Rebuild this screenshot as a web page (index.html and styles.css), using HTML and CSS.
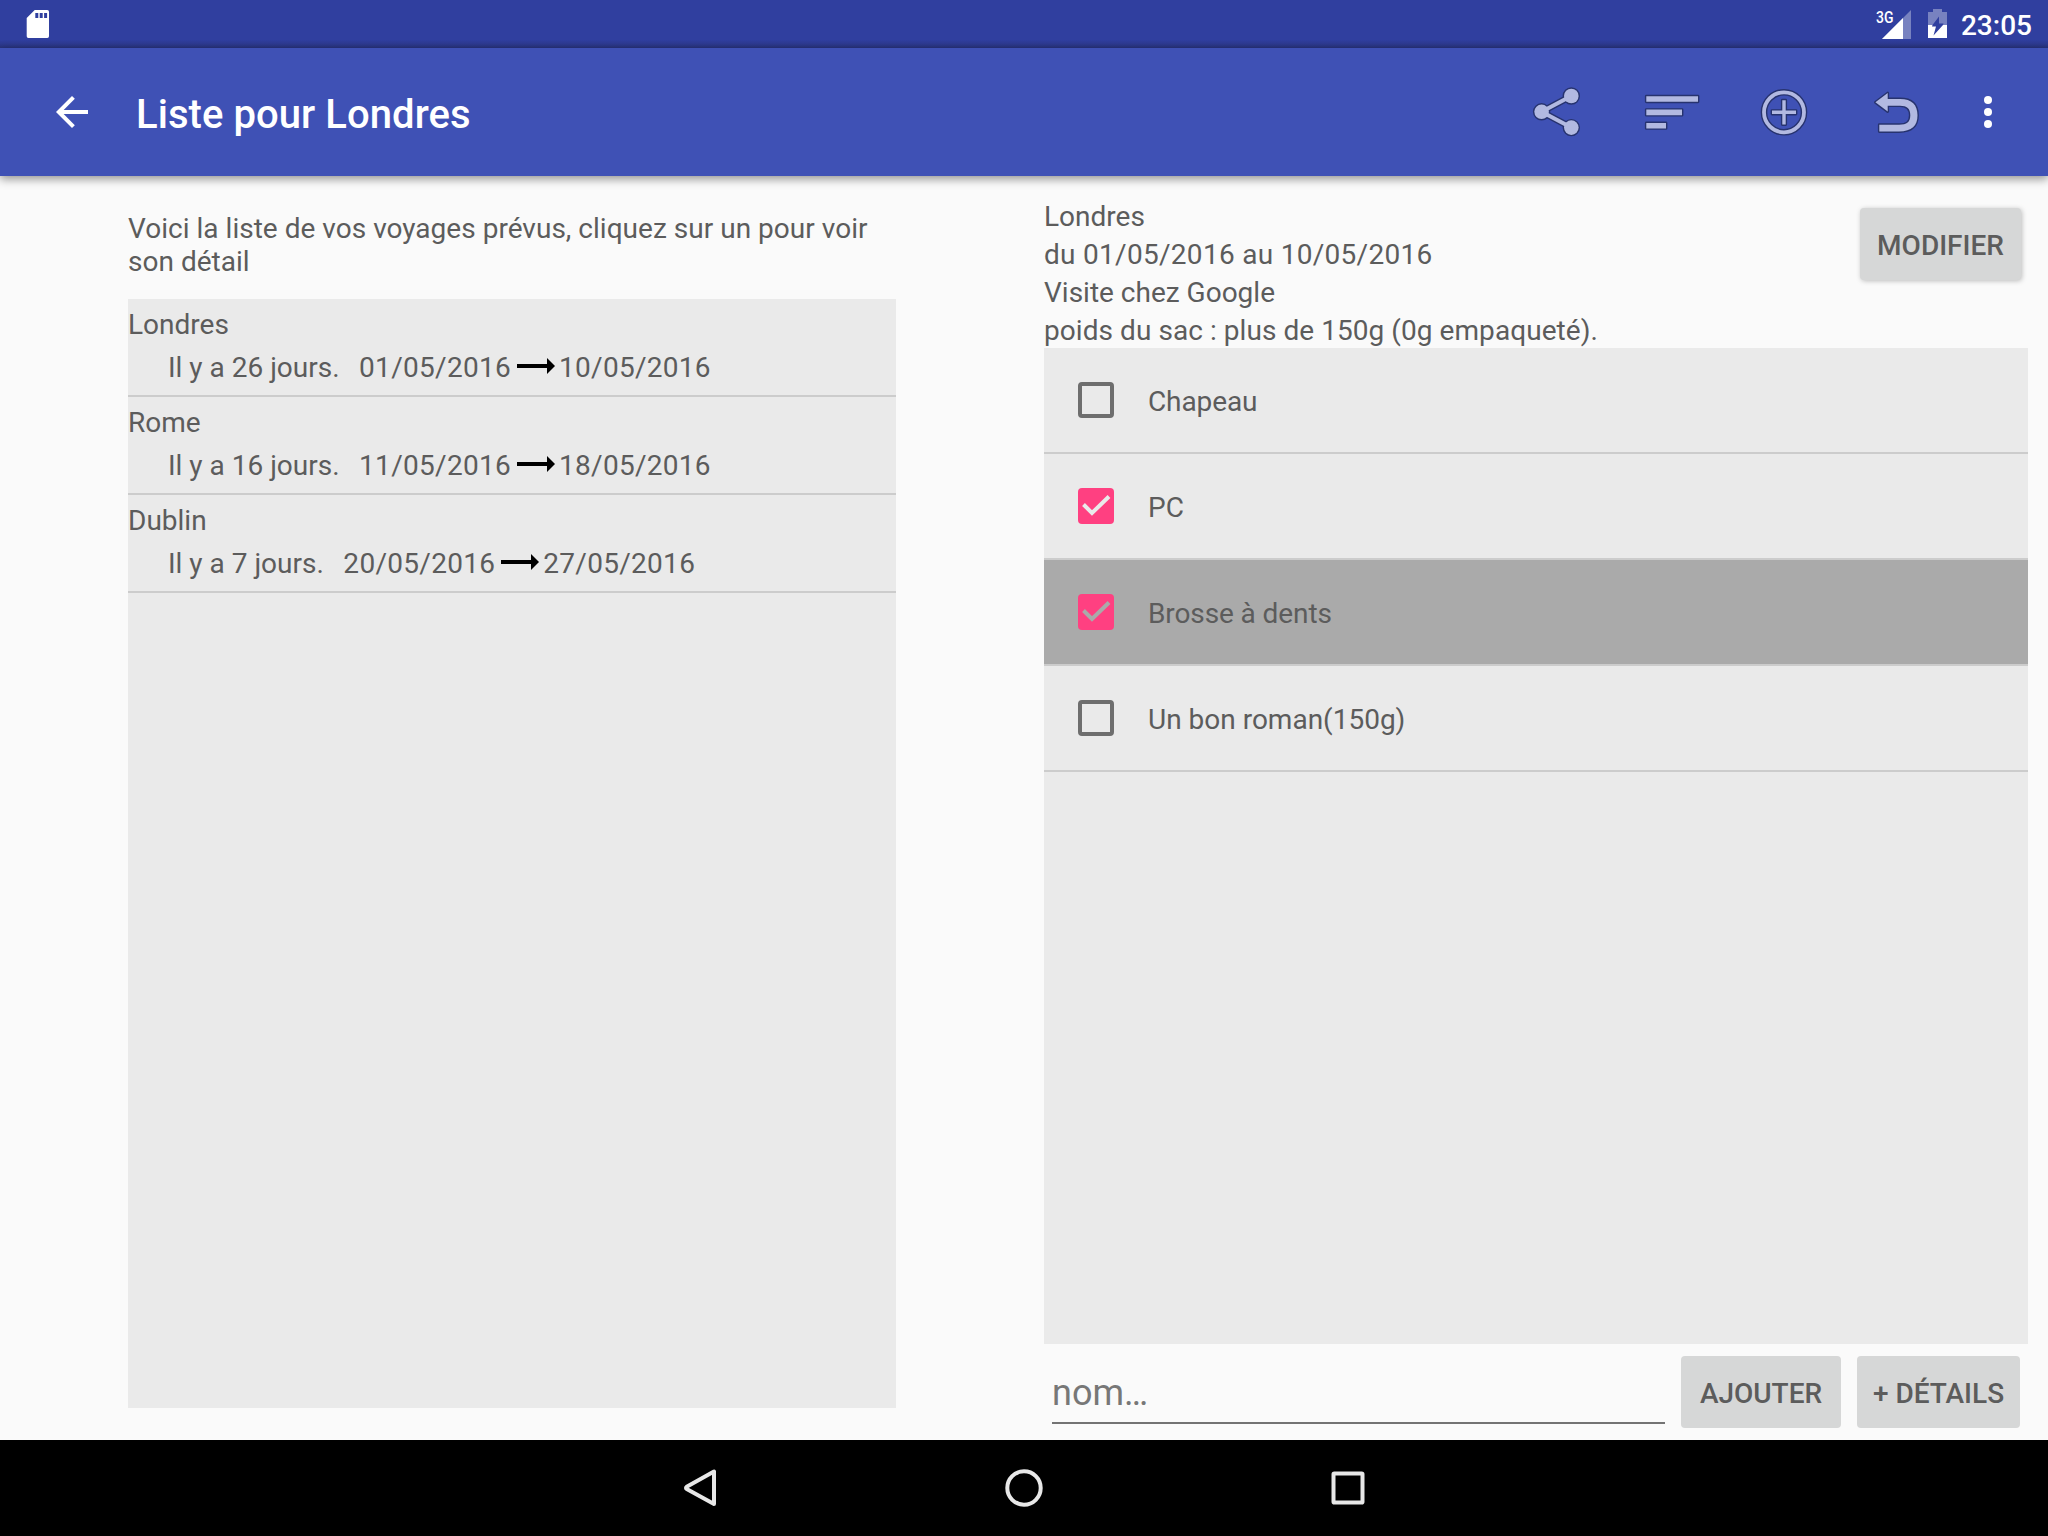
FILE: index.html
```html
<!DOCTYPE html>
<html lang="fr">
<head>
<meta charset="utf-8">
<title>Liste pour Londres</title>
<link rel="stylesheet" href="styles.css">
</head>
<body>
<div class="screen">
  <div class="status-bar">
    <svg class="sd-icon" width="24" height="28" viewBox="0 0 24 28"><path fill="#fff" fill-rule="evenodd" d="M8.7 0H21.3Q23 0 23 1.7V26.3Q23 28 21.3 28H2.4Q.7 28 .7 26.3V8Zm.6 3v5h3V3Zm4.4 0v5h3V3Zm4.4 0v5h3V3Z"/></svg>
    <div class="status-right">
      <span class="network">3G</span>
      <svg class="signal-icon" width="29" height="29" viewBox="0 0 29 29"><path fill="#fff" fill-opacity=".35" d="M29 0V29H0Z"/><path fill="#fff" d="M21 8V29H0Z"/></svg>
      <svg class="battery-icon" width="19" height="29" viewBox="0 0 19 29"><path fill="#fff" fill-opacity=".35" d="M5 0h9v3h5v13h-4l.5-1.500h-4.500V7.500L4.500 16H0V3h5Z"/><path fill="#fff" d="M0 16H4.500L4 17.500H8L5.500 26.500 15 16H19V29H0Z"/></svg>
      <span class="clock">23:05</span>
    </div>
  </div>
  <header class="app-bar">
    <svg class="back" width="32" height="32" viewBox="0 0 32 32"><path fill="#fff" d="M32 14H7.660L18.840 2.820 16 0 0 16 16 32l2.820-2.820L7.660 18H32Z"/></svg>
    <h1 class="title">Liste pour Londres</h1>
    <div class="actions">
      <svg class="action" width="64" height="64" viewBox="0 0 64 64"><path class="edge" d="M43.300 16 13.600 31.800 43.300 47.600"/><circle class="dot" cx="43.300" cy="16" r="7.300"/><circle class="dot" cx="13.600" cy="31.800" r="7.300"/><circle class="dot" cx="43.300" cy="47.600" r="7.300"/><path class="link" d="M43.300 16 13.600 31.800 43.300 47.600"/></svg>
      <svg class="action" width="64" height="64" viewBox="0 0 64 64"><path class="shape" d="M6.300 16.200H58V21.800H6.300ZM6.300 29.600H42V35.200H6.300ZM6.300 43H26V48.400H6.300Z"/></svg>
      <svg class="action" width="64" height="64" viewBox="0 0 64 64"><circle class="ring-edge" cx="32" cy="32.300" r="20"/><circle class="ring" cx="32" cy="32.300" r="20"/><path class="shape" d="M30.300 20.200h3.400v10.400h10.300v3.400H33.700V44.600H30.300V34H20V30.600H30.300Z"/></svg>
      <svg class="action" width="64" height="64" viewBox="0 0 64 64"><path class="shape" d="M11.400 22.300 23.700 13V19H36C48 19 53.500 25 53.500 35.300S48 51.500 35 51.500H15.300V44.700H35C43 44.700 46.300 42 46.300 35.300S43 25.700 36 25.700H23.700V31.600Z"/></svg>
      <svg class="overflow" width="8" height="32" viewBox="0 0 8 32"><g fill="#fff"><circle cx="4" cy="4" r="4"/><circle cx="4" cy="16" r="4"/><circle cx="4" cy="28" r="4"/></g></svg>
    </div>
  </header>
  <main class="content">
    <section class="trips">
      <p class="intro">Voici la liste de vos voyages prévus, cliquez sur un pour voir son détail</p>
      <ul class="list trip-list">
        <li class="trip"><div class="trip-name">Londres</div><div class="trip-dates"><span class="ago">Il y a 26 jours.</span><span class="date">01/05/2016</span><svg class="arrow" width="38" height="16" viewBox="0 0 38 16"><path d="M0 6H30V0L38 8 30 16V10H0Z"/></svg><span class="date">10/05/2016</span></div></li>
        <li class="trip"><div class="trip-name">Rome</div><div class="trip-dates"><span class="ago">Il y a 16 jours.</span><span class="date">11/05/2016</span><svg class="arrow" width="38" height="16" viewBox="0 0 38 16"><path d="M0 6H30V0L38 8 30 16V10H0Z"/></svg><span class="date">18/05/2016</span></div></li>
        <li class="trip"><div class="trip-name">Dublin</div><div class="trip-dates"><span class="ago">Il y a 7 jours.</span><span class="date">20/05/2016</span><svg class="arrow" width="38" height="16" viewBox="0 0 38 16"><path d="M0 6H30V0L38 8 30 16V10H0Z"/></svg><span class="date">27/05/2016</span></div></li>
      </ul>
    </section>
    <section class="detail">
      <div class="detail-head">
        <div class="summary">
          <div>Londres</div>
          <div class="date">du 01/05/2016 au 10/05/2016</div>
          <div>Visite chez Google</div>
          <div class="weight">poids du sac : plus de 150g (0g empaqueté).</div>
        </div>
        <button class="btn raised">MODIFIER</button>
      </div>
      <ul class="list item-list">
        <li class="item"><span class="box"></span><span class="label tight">Chapeau</span></li>
        <li class="item"><span class="box checked"><svg width="36" height="36" viewBox="0 0 36 36"><path d="M5.500 16.500 14 25 31 8.500"/></svg></span><span class="label">PC</span></li>
        <li class="item selected"><span class="box checked"><svg width="36" height="36" viewBox="0 0 36 36"><path d="M5.500 16.500 14 25 31 8.500"/></svg></span><span class="label tight">Brosse à dents</span></li>
        <li class="item"><span class="box"></span><span class="label">Un bon roman(150g)</span></li>
      </ul>
      <div class="add-row">
        <div class="field">nom…</div>
        <button class="btn add">AJOUTER</button>
        <button class="btn more">+ DÉTAILS</button>
      </div>
    </section>
  </main>
  <nav class="nav-bar">
    <svg width="40" height="40" viewBox="0 0 40 40"><path d="M34 3.500V36L6.700 21Q5.300 19.900 6.700 18.800Z"/></svg>
    <svg width="40" height="40" viewBox="0 0 40 40"><circle cx="20" cy="20" r="16.700"/></svg>
    <svg width="40" height="40" viewBox="0 0 40 40"><rect x="5.500" y="5.500" width="29" height="29" rx=".8"/></svg>
  </nav>
</div>
</body>
</html>
```
FILE: styles.css
```css
* { box-sizing: border-box; }
body { margin: 0; }
.screen {
  width: 2048px;
  height: 1536px;
  display: flex;
  flex-direction: column;
  background: #fafafa;
  color: #5c5c5c;
  font: 28px/33px Roboto, sans-serif;
  overflow: hidden;
}
svg { display: block; flex: none; }
.status-bar {
  height: 48px;
  flex: none;
  display: flex;
  justify-content: space-between;
  align-items: flex-start;
  padding: 10px 16px 0 26px;
  background: linear-gradient(#303f9f 40px, #2d3a90 44px, #28337c 48px);
}
.status-right { display: flex; color: #fff; }
.network { width: 18px; font: 500 17px/15px Roboto, sans-serif; margin-right: -12px; transform: scaleX(.82); transform-origin: left; }
.signal-icon { margin-right: 17px; }
.battery-icon { margin: -1px 14px 0 0; }
.clock { font-weight: 500; line-height: 32px; }
.app-bar {
  height: 128px;
  flex: none;
  display: flex;
  align-items: center;
  padding: 0 56px;
  background: #3f51b5;
  box-shadow: 0 3px 9px rgba(0, 0, 0, .42);
}
.title { margin: 5px 0 0 48px; font: 500 40px/48px Roboto, sans-serif; color: #fff; letter-spacing: .07px; }
.actions { margin-left: auto; display: flex; align-items: center; gap: 48px; }
.overflow { margin-left: 8px; }
.shape, .dot { fill: #b2b9e1; stroke: #27336f; stroke-width: 2.8; stroke-linejoin: round; paint-order: stroke; }
.edge { fill: none; stroke: #27336f; stroke-width: 6.8; }
.link { fill: none; stroke: #b2b9e1; stroke-width: 4; }
.ring-edge { fill: none; stroke: #27336f; stroke-width: 6.6; }
.ring { fill: none; stroke: #b2b9e1; stroke-width: 3.8; }
.content { flex: 1; min-height: 0; display: flex; }
.trips { width: 1044px; padding: 36px 148px 32px 128px; display: flex; flex-direction: column; }
.intro { margin: 0 0 21px; letter-spacing: .02px; }
.list { list-style: none; margin: 0; padding: 0; flex: 1; background: #eaeaea; }
.trip { height: 98px; border-bottom: 2px solid #ccc; padding-top: 9px; }
.trip-dates { display: flex; align-items: center; margin-top: 10px; padding-left: 40px; }
.ago { margin-right: 19.5px; }
.date { letter-spacing: .29px; }
.weight { letter-spacing: .06px; }
.arrow { margin: 0 4px 3px 6px; }
.detail { width: 984px; display: flex; flex-direction: column; }
.detail-head { height: 172px; display: flex; justify-content: space-between; align-items: flex-start; padding: 22px 7px 0 0; line-height: 38px; }
.btn { height: 72px; border: 0; border-radius: 4px; padding: 2px 0 0; background: #d6d7d7; color: #5c5c5c; font: 500 28px/33px Roboto, sans-serif; }
.raised { width: 161px; margin-top: 10px; box-shadow: 1px 1px 5px rgba(0, 0, 0, .25); }
.item { height: 106px; border-bottom: 2px solid #ccc; display: flex; align-items: center; padding-left: 34px; gap: 34px; }
.item.selected { background: #aaa; }
.label { padding-top: 2px; }
.tight { letter-spacing: -.1px; }
.box { width: 36px; height: 36px; border: 4px solid #6e6e6e; border-radius: 4px; }
.box.checked { border: 0; background: #ff4081; }
.box path { fill: none; stroke: #eaeaea; stroke-width: 4; }
.selected .box path { stroke: #aaa; }
.add-row { height: 96px; flex: none; display: flex; align-items: flex-start; padding: 12px 8px 0; }
.field { width: 613px; height: 68px; margin-right: 16px; border-bottom: 2px solid #737373; font-size: 36px; line-height: 42px; padding-top: 16px; color: #777; }
.add { width: 160px; margin-right: 16px; }
.more { width: 163px; }
.nav-bar { height: 96px; flex: none; background: #000; display: flex; justify-content: center; align-items: center; gap: 284px; }
.nav-bar svg * { fill: none; stroke: #e8e8e8; stroke-width: 4; stroke-linejoin: round; }
```
